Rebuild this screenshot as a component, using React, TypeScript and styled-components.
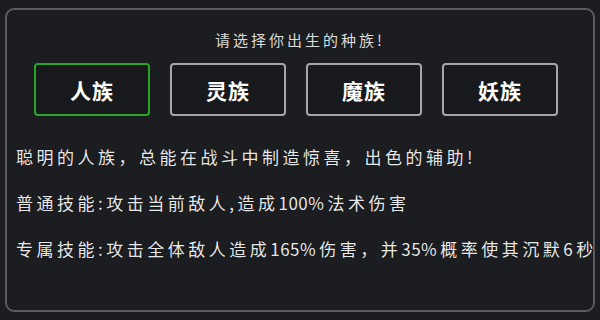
import * as React from 'react'
import styled, { createGlobalStyle } from 'styled-components'

const GlobalStyle = createGlobalStyle`
  html, body {
    margin: 0;
    padding: 0;
    background: #1b1d20;
  }
`

const Screen = styled.div`
  box-sizing: border-box;
  width: 600px;
  height: 320px;
  padding: 8px 5px 8px 5px;
  background: #1b1d20;
  font-family: "Noto Sans CJK SC", "Noto Sans", sans-serif;
  color: #e6e6e6;
`

const Frame = styled.div`
  box-sizing: border-box;
  height: 100%;
  border: 2px solid #585b60;
  border-radius: 9px;
  padding: 20px 0 0 0;
  display: flex;
  flex-direction: column;
`

const Title = styled.div`
  text-align: center;
  font-size: 15px;
  line-height: 20px;
  letter-spacing: 3px;
  color: #dcdcdc;
`

const RaceRow = styled.div`
  display: flex;
  gap: 20px;
  margin-top: 13px;
  padding-left: 27px;
`

const RaceButton = styled.div<{ $active?: boolean }>`
  box-sizing: border-box;
  width: 116px;
  height: 53px;
  border: 2px solid ${(p) => (p.$active ? '#2aa52a' : '#a3a6aa')};
  border-radius: 4px;
  background: #17191c;
  display: flex;
  align-items: center;
  justify-content: center;
  font-size: 21px;
  font-weight: 700;
  letter-spacing: 1px;
  color: #ffffff;
`

const Desc = styled.div`
  margin-top: 18px;
  padding-left: 9px;
  display: flex;
  flex-direction: column;
`

const Line = styled.div`
  font-size: 17px;
  line-height: 46px;
  letter-spacing: 3.5px;
  white-space: nowrap;
  color: #e8e8e8;
  text-shadow: 0 0 1px rgba(0, 0, 0, 0.8);
`

// digits and punctuation sit tighter than the han characters
const Tight = styled.span`
  letter-spacing: 0.5px;
  margin-right: 3px;
`

const races = ['人族', '灵族', '魔族', '妖族']

export default function App() {
  const [selected, setSelected] = React.useState(0)
  return (
    <>
      <GlobalStyle />
      <Screen>
        <Frame>
          <Title>请选择你出生的种族!</Title>
          <RaceRow>
            {races.map((r, i) => (
              <RaceButton key={r} $active={i === selected} onClick={() => setSelected(i)}>
                {r}
              </RaceButton>
            ))}
          </RaceRow>
          <Desc>
            <Line>聪明的人族，总能在战斗中制造惊喜，出色的辅助!</Line>
            <Line>
              普通技能<Tight>:</Tight>攻击当前敌人<Tight>,</Tight>造成<Tight>100%</Tight>法术伤害
            </Line>
            <Line>
              专属技能<Tight>:</Tight>攻击全体敌人造成<Tight>165%</Tight>伤害，并<Tight>35%</Tight>概率使其沉默<Tight>6</Tight>秒
            </Line>
          </Desc>
        </Frame>
      </Screen>
    </>
  )
}
